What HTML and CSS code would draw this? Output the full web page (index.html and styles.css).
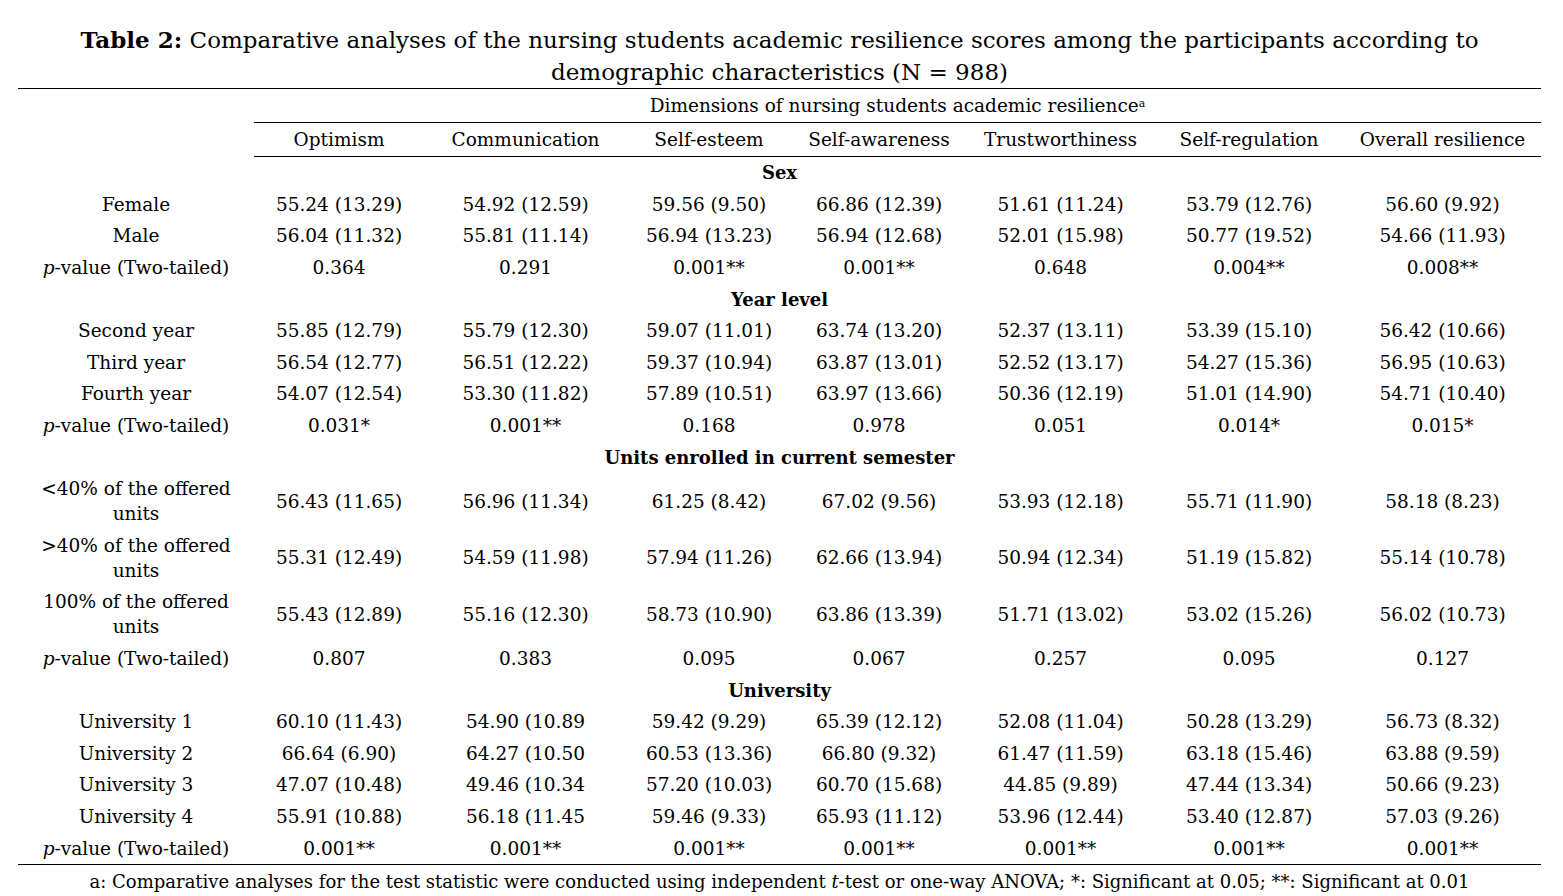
FILE: index.html
```html
<!DOCTYPE html>
<html>
<head>
<meta charset="utf-8">
<link rel="stylesheet" href="styles.css">
</head>
<body>
<div class="page">
  <h1 class="title"><b>Table 2:</b> Comparative analyses of the nursing students academic resilience scores among the participants according to demographic characteristics (N = 988)</h1>
  <table class="tbl">
    <colgroup>
      <col class="c-label"><col class="c1"><col class="c2"><col class="c3"><col class="c4"><col class="c5"><col class="c6"><col class="c7">
    </colgroup>
    <thead>
      <tr class="hrow1">
        <th class="blank" rowspan="2"></th>
        <th class="dim" colspan="7">Dimensions of nursing students academic resilience<sup>a</sup></th>
      </tr>
      <tr class="hrow2">
        <th>Optimism</th><th>Communication</th><th>Self-esteem</th><th>Self-awareness</th><th>Trustworthiness</th><th>Self-regulation</th><th>Overall resilience</th>
      </tr>
    </thead>
    <tbody>
      <tr class="sec"><td colspan="8">Sex</td></tr>
      <tr><td>Female</td><td>55.24 (13.29)</td><td>54.92 (12.59)</td><td>59.56 (9.50)</td><td>66.86 (12.39)</td><td>51.61 (11.24)</td><td>53.79 (12.76)</td><td>56.60 (9.92)</td></tr>
      <tr><td>Male</td><td>56.04 (11.32)</td><td>55.81 (11.14)</td><td>56.94 (13.23)</td><td>56.94 (12.68)</td><td>52.01 (15.98)</td><td>50.77 (19.52)</td><td>54.66 (11.93)</td></tr>
      <tr><td><i>p</i>-value (Two-tailed)</td><td>0.364</td><td>0.291</td><td>0.001**</td><td>0.001**</td><td>0.648</td><td>0.004**</td><td>0.008**</td></tr>
      <tr class="sec"><td colspan="8">Year level</td></tr>
      <tr><td>Second year</td><td>55.85 (12.79)</td><td>55.79 (12.30)</td><td>59.07 (11.01)</td><td>63.74 (13.20)</td><td>52.37 (13.11)</td><td>53.39 (15.10)</td><td>56.42 (10.66)</td></tr>
      <tr><td>Third year</td><td>56.54 (12.77)</td><td>56.51 (12.22)</td><td>59.37 (10.94)</td><td>63.87 (13.01)</td><td>52.52 (13.17)</td><td>54.27 (15.36)</td><td>56.95 (10.63)</td></tr>
      <tr><td>Fourth year</td><td>54.07 (12.54)</td><td>53.30 (11.82)</td><td>57.89 (10.51)</td><td>63.97 (13.66)</td><td>50.36 (12.19)</td><td>51.01 (14.90)</td><td>54.71 (10.40)</td></tr>
      <tr><td><i>p</i>-value (Two-tailed)</td><td>0.031*</td><td>0.001**</td><td>0.168</td><td>0.978</td><td>0.051</td><td>0.014*</td><td>0.015*</td></tr>
      <tr class="sec"><td colspan="8">Units enrolled in current semester</td></tr>
      <tr><td>&lt;40% of the offered<br>units</td><td>56.43 (11.65)</td><td>56.96 (11.34)</td><td>61.25 (8.42)</td><td>67.02 (9.56)</td><td>53.93 (12.18)</td><td>55.71 (11.90)</td><td>58.18 (8.23)</td></tr>
      <tr><td>&gt;40% of the offered<br>units</td><td>55.31 (12.49)</td><td>54.59 (11.98)</td><td>57.94 (11.26)</td><td>62.66 (13.94)</td><td>50.94 (12.34)</td><td>51.19 (15.82)</td><td>55.14 (10.78)</td></tr>
      <tr><td>100% of the offered<br>units</td><td>55.43 (12.89)</td><td>55.16 (12.30)</td><td>58.73 (10.90)</td><td>63.86 (13.39)</td><td>51.71 (13.02)</td><td>53.02 (15.26)</td><td>56.02 (10.73)</td></tr>
      <tr><td><i>p</i>-value (Two-tailed)</td><td>0.807</td><td>0.383</td><td>0.095</td><td>0.067</td><td>0.257</td><td>0.095</td><td>0.127</td></tr>
      <tr class="sec"><td colspan="8">University</td></tr>
      <tr><td>University 1</td><td>60.10 (11.43)</td><td>54.90 (10.89</td><td>59.42 (9.29)</td><td>65.39 (12.12)</td><td>52.08 (11.04)</td><td>50.28 (13.29)</td><td>56.73 (8.32)</td></tr>
      <tr><td>University 2</td><td>66.64 (6.90)</td><td>64.27 (10.50</td><td>60.53 (13.36)</td><td>66.80 (9.32)</td><td>61.47 (11.59)</td><td>63.18 (15.46)</td><td>63.88 (9.59)</td></tr>
      <tr><td>University 3</td><td>47.07 (10.48)</td><td>49.46 (10.34</td><td>57.20 (10.03)</td><td>60.70 (15.68)</td><td>44.85 (9.89)</td><td>47.44 (13.34)</td><td>50.66 (9.23)</td></tr>
      <tr><td>University 4</td><td>55.91 (10.88)</td><td>56.18 (11.45</td><td>59.46 (9.33)</td><td>65.93 (11.12)</td><td>53.96 (12.44)</td><td>53.40 (12.87)</td><td>57.03 (9.26)</td></tr>
      <tr class="last"><td><i>p</i>-value (Two-tailed)</td><td>0.001**</td><td>0.001**</td><td>0.001**</td><td>0.001**</td><td>0.001**</td><td>0.001**</td><td>0.001**</td></tr>
    </tbody>
  </table>
  <p class="note">a: Comparative analyses for the test statistic were conducted using independent <i>t</i>-test or one-way ANOVA; *: Significant at 0.05; **: Significant at 0.01</p>
</div>
</body>
</html>
```

FILE: styles.css
```css
html, body {
  margin: 0;
  padding: 0;
  background: #fff;
}
body {
  font-family: "DejaVu Serif", serif;
  color: #000;
}
.page {
  width: 1523px;
  padding: 24px 22px 0 18px;
}
.title {
  margin: 0;
  font-weight: normal;
  font-size: 23px;
  line-height: 32px;
  text-align: center;
  padding: 0;
}
.title b {
  font-weight: bold;
}
.tbl {
  width: 1523px;
  table-layout: fixed;
  border-collapse: collapse;
  border-top: 1.5px solid #000;
  border-bottom: 1.5px solid #000;
  font-size: 18.5px;
}
.c-label { width: 236px; }
.c1 { width: 170px; }
.c2 { width: 203px; }
.c3 { width: 164px; }
.c4 { width: 176px; }
.c5 { width: 187px; }
.c6 { width: 190px; }
.c7 { width: 197px; }
.tbl th {
  font-weight: normal;
  line-height: 25px;
  padding: 4px 0;
  text-align: center;
  border-bottom: 1.5px solid #000;
}
.tbl th.blank {
  border-bottom: none;
}
.tbl th.dim sup {
  font-size: 11px;
  vertical-align: 5px;
  line-height: 0;
}
.tbl td {
  line-height: 25px;
  padding: 3.3px 0;
  text-align: center;
  white-space: nowrap;
  vertical-align: middle;
}
.tbl tr.sec td {
  font-weight: bold;
  font-size: 18px;
}
.note {
  margin: 4px 0 0;
  font-size: 18px;
  line-height: 25px;
  text-align: center;
}
```
